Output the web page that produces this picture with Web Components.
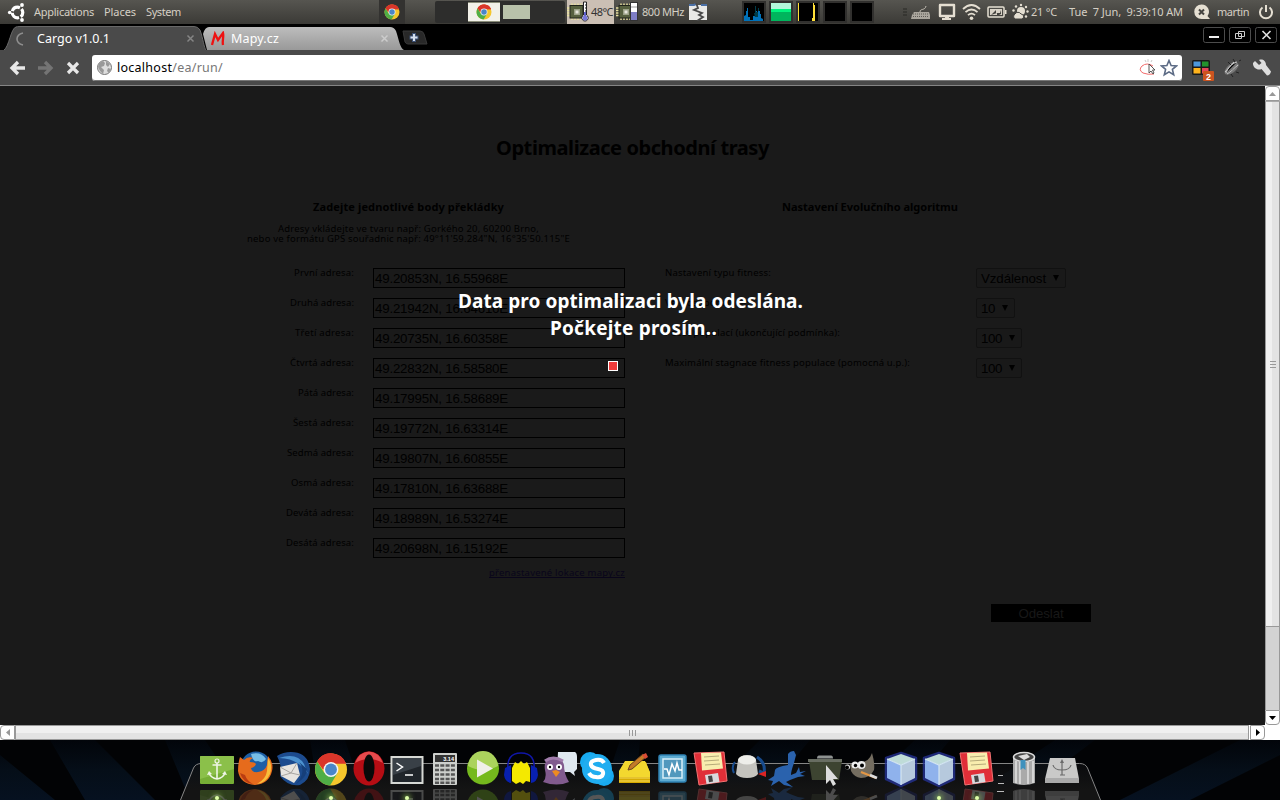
<!DOCTYPE html>
<html lang="cs">
<head>
<meta charset="utf-8">
<title>Cargo v1.0.1</title>
<style>
html,body{margin:0;height:100%;background:#000;overflow:hidden}
body{font-family:"Noto Sans","Open Sans",sans-serif}
</style>
</head>
<body>
<desk-screen></desk-screen>
<script>
const define = (name, html) => {
  const t = document.createElement('template');
  t.innerHTML = html;
  customElements.define(name, class extends HTMLElement {
    connectedCallback() {
      if (this.shadowRoot) return;
      this.attachShadow({ mode: 'open' }).append(document.importNode(t.content, true));
    }
  });
};

/* A single line of text, tracked so that it fills the width in its w attribute. */
customElements.define('fit-text', class extends HTMLElement {
  connectedCallback() {
    if (this.shadowRoot) return;
    const r = this.attachShadow({ mode: 'open' });
    r.innerHTML = '<style>:host{display:block;white-space:pre;flex:none}span{display:inline-block}</style><span><slot></slot></span>';
    const w = +this.getAttribute('w'), s = r.querySelector('span'), n = this.textContent.length;
    this.style.width = w + 'px';
    if (n > 1) s.style.letterSpacing = ((w - s.getBoundingClientRect().width) / n).toFixed(3) + 'px';
  }
});

const chrome = `<circle cx="18" cy="18" r="16" fill="#f5c62c"/><path d="M18 18L4.2 10A16 16 0 0 1 33 12H18z" fill="#d9352a"/><path d="M4.2 10A16 16 0 0 0 17 34L24.5 21.5 11 21z" fill="#4fae46"/><path d="M4.2 10A16 16 0 0 1 33 12H18L10 18z" fill="#d9352a"/><circle cx="18" cy="18" r="7.4" fill="#f4f4f4"/><circle cx="18" cy="18" r="5.9" fill="#4a86c8"/>`;
const chip = `<path d="M5 3.500v3M8 3.500v3M11 3.500v3M14 3.500v3M5 16v4M8 16v4M11 16v4M14 16v4" stroke="#e6e0a0" stroke-width="1.500"/><path d="M0 8h4M0 10.500h4M0 13h4M0 15.500h4" stroke="#e6e0a0" stroke-width="1.500"/><rect x="3" y="5.500" width="13" height="12.500" fill="#56603f" stroke="#20241a"/><rect x="7" y="9" width="6" height="6" fill="#9ba187"/><rect x="8.500" y="10.500" width="3" height="3" fill="#e6e6dc"/>`;

define('top-panel', `<style>
:host{display:flex;height:24px;align-items:center;background:linear-gradient(#565550,#3b3a36);color:#d5cfc4;font-size:11px;line-height:22px;box-sizing:border-box;padding-left:7px}
svg{display:block;flex:none}fit-text{margin-top:-1px}
.task{width:26px;height:24px;background:#333230;display:flex;align-items:center;justify-content:center;margin-left:198px}
.ws{width:130px;height:22px;background:#2d2d2c;display:flex;align-items:center;margin-left:30px;box-sizing:border-box;padding-left:33px;border-radius:2px}
.on{width:32px;height:18px;background:#f2f1e9;display:flex;justify-content:center;align-items:center;box-shadow:0 -1px #8a8d79,0 1px #8a8d79}
.win{width:27px;height:14px;background:#b9c2aa;margin-left:3px}
.temp{width:47px;height:24px;background:#cbbfb4;color:#333;display:flex;align-items:center;margin-left:2px}
.g{width:24px;height:22px;box-sizing:border-box;border:2px solid #31302e;background:#000;margin-right:3px}
</style>
<svg width="19" height="20" viewBox="0 0 19 20"><circle cx="10.500" cy="10.500" r="5.300" fill="none" stroke="#fff" stroke-width="3.200" stroke-dasharray="9.300 1.800" stroke-dashoffset="4.600"/><g fill="#fff"><circle cx="2.700" cy="10.500" r="1.800"/><circle cx="15" cy="3" r="1.900"/><circle cx="15" cy="18" r="1.900"/></g></svg>
<fit-text w="60" style="margin-left:8px">Applications</fit-text><fit-text w="32" style="margin-left:10px">Places</fit-text><fit-text w="35" style="margin-left:10px">System</fit-text>
<div class="task"><svg width="16" height="16" viewBox="1 1 34 34">${chrome}</svg></div>
<div class="ws"><div class="on"><svg width="16" height="16" viewBox="1 1 34 34">${chrome}</svg></div><div class="win"></div></div>
<div class="temp"><svg width="24" height="24">${chip}<path d="M16.500 2h3v13a3.200 3.200 0 1 1-3 0z" fill="#fff" stroke="#222"/><path d="M18 12v7" stroke="#6060c8" stroke-width="2"/><circle cx="18" cy="18" r="2.500" fill="#7777d8"/><path d="M18 5h2M18 8h2M18 11h2" stroke="#222"/></svg><fit-text w="22">48°C</fit-text></div>
<svg width="26" height="24" style="margin-left:2px">${chip}<rect x="14.500" y="2.500" width="7" height="18" fill="#fff" stroke="#333"/><path d="M15 12h6v8h-6z" fill="#7e7dc5"/><path d="M15 7h6" stroke="#999"/></svg>
<fit-text w="42">800 MHz</fit-text>
<svg width="18" height="18" style="margin-left:5px"><path d="M0 2h18v15H0z" fill="#e9e9e7"/><path d="M0 2h5l2-1M12 2h6" stroke="#4a6fa5" stroke-width="2"/><path d="M7 0l2 5-4 2 8 3-3 2 4 2-6 4" fill="none" stroke="#484848" stroke-width="1.800"/></svg>
<div class="g" style="margin-left:35px"><svg width="20" height="18"><path d="M0 18v-5l2-1V8h1V5h1v9h2v3h3v-4h2v1h1V8h1v6h1V8h2v3h1v4l2 1v2z" fill="#0072ba"/><path d="M10 10h1V3h1v6h2V5h1v3h-1v6h-3z" fill="#003d4a"/></svg></div>
<div class="g" style="background:linear-gradient(#b2f7da 0 6px,#00f47e 6px 9px,#00b55d 9px)"></div>
<div class="g"><svg width="20" height="18"><path d="M0 0h1v18H0zM15 0h1v2h1v16h-3v-3h1z" fill="#ffdf38"/></svg></div><div class="g"></div><div class="g"></div>
<svg width="5" height="8" style="margin-left:26px"><path d="M0 1h4M0 4h4M0 7h4" stroke="#292825"/></svg>
<svg width="20" height="18" style="margin-left:3px"><path d="M1 12l2-3h15l1 3v4H0z" fill="#aaa69d"/><path d="M2 11h16M2 13.500h16" stroke="#5d5a55" stroke-dasharray="1 1"/><path d="M9 9c0-4 5-1 6-6" fill="none" stroke="#c5c0b6"/></svg>
<svg width="18" height="18" style="margin-left:7px"><path d="M2 2h14v11H2z" fill="none" stroke="#e5dfd2" stroke-width="2.400" stroke-linejoin="round"/><path d="M7 14h4v1h2v2H4v-2h3z" fill="#e5dfd2"/></svg>
<svg width="19" height="18" style="margin-left:6px"><g fill="none" stroke="#e5dfd2" stroke-width="1.800"><path d="M1 6q8.500-8 17 0M3.500 9.200q6-5.500 12 0M6 12.200q3.500-3.200 7 0"/></g><circle cx="9.500" cy="15.200" r="1.800" fill="#e5dfd2"/></svg>
<svg width="20" height="14" style="margin-left:6px"><rect x="1" y="2" width="16" height="10" rx="1" fill="none" stroke="#e5dfd2" stroke-width="1.500"/><path d="M3 4h12v6H3z" fill="#d8d2c6"/><path d="M4 10l5-5v3h4l1-3v4l-4 2V8z" fill="#44433f"/><path d="M18 5h1.500v4H18z" fill="#e5dfd2"/></svg>
<svg width="18" height="18" style="margin-left:4px"><circle cx="10" cy="8" r="4" fill="#e5dfd2"/><g fill="#e5dfd2"><circle cx="10" cy="2" r="1.200"/><circle cx="5" cy="3.500" r="1.200"/><circle cx="15" cy="4" r="1.200"/><circle cx="2.500" cy="7.500" r="1.200"/><circle cx="16.500" cy="8.500" r="1.200"/><circle cx="15" cy="13.500" r="1.200"/></g><path d="M4 16a3 3 0 0 1 0-5 3.500 3.500 0 0 1 6 0 2.600 2.600 0 0 1 1 5z" fill="#e5dfd2" stroke="#454440"/></svg>
<fit-text w="26" style="margin-left:2px">21 °C</fit-text><fit-text w="114" style="margin-left:12px">Tue  7 Jun,  9:39:10 AM</fit-text>
<svg width="18" height="18" style="margin-left:10px"><path d="M8.500 1.500a7.200 7.200 0 1 0 0 14.500H17l-2.500-3A7.200 7.200 0 0 0 8.500 1.500z" fill="#e5dfd2"/><path d="M6 6.500l5 5M11 6.500l-5 5" stroke="#454440" stroke-width="2"/></svg>
<fit-text w="32" style="margin-left:6px">martin</fit-text>
<svg width="16" height="18" style="margin-left:9px"><path d="M4.500 4.500a6 6 0 1 0 7 0" fill="none" stroke="#e5dfd2" stroke-width="2"/><path d="M8 2v7" stroke="#e5dfd2" stroke-width="2"/></svg>
`);

define('tab-strip', `<style>
:host{display:flex;height:26px;background:#000;padding-left:4px;box-sizing:border-box;color:#fff;font-size:12.500px;line-height:24px}
.tab{display:grid;grid-template-columns:1fr;width:202px;height:24px;margin-top:2px;flex:none}
.tab>*{grid-area:1/1}.c{display:flex;align-items:center;padding:0 11px 0 11px}.c fit-text{margin-top:1px}
svg{display:block;flex:none}.a{z-index:1}.b{margin-left:-3px}
.w{display:flex;gap:4px;margin:3px 3px 0 auto}
</style>
<div class="tab a"><svg width="202" height="24"><path d="M0 24C5 21 7 2 12 1Q13 .500 16 .500H190Q194 .500 196 4C199 12 200 22 202 24z" fill="#4a4a4a"/><path d="M0 24C5 21 7 2 12 1Q13 .500 16 .500H190Q194 .500 196 4C199 12 200 22 202 24" fill="none" stroke="#696969"/></svg>
<div class="c"><svg width="12" height="16"><path d="M8 2C0 4 0 12 8 14" fill="none" stroke="#8e8e8e" stroke-width="1.600"/></svg><fit-text w="73" style="margin-left:10px">Cargo v1.0.1</fit-text><svg width="9" height="9" style="margin-left:auto"><path d="M1.500 1.500l6 6M7.500 1.500l-6 6" stroke="#858585" stroke-width="1.500"/></svg></div></div>
<div class="tab b"><svg width="202" height="24"><defs><linearGradient id="t" x2="0" y2="1"><stop stop-color="#bdbdbd"/><stop offset="1" stop-color="#999"/></linearGradient></defs><path d="M4 24L0 8Q2 1 6 1H187Q191 1 193 5C196 14 197 22 201 24z" fill="url(#t)"/></svg>
<div class="c" style="padding-left:8px"><svg width="15" height="16"><path d="M1 14L4 3l3 6 5-7c1 4-1 8 0 12" fill="none" stroke="#ee1111" stroke-width="2.300"/></svg><fit-text w="48" style="margin-left:5px">Mapy.cz</fit-text><svg width="9" height="9" style="margin-left:auto;margin-right:5px"><path d="M1.500 1.500l6 6M7.500 1.500l-6 6" stroke="#ccc" stroke-width="1.500"/></svg></div></div>
<svg width="26" height="16" style="margin:6px 0 0 -3px"><path d="M1 1h17q3 0 4 3l3 10H6q-2 0-3-2z" fill="#282828" stroke="#383838"/><path d="M12 3v9M7.500 7.500h9" stroke="#3c5074" stroke-width="4"/><path d="M12 4v7M8.500 7.500h7" stroke="#d5deec" stroke-width="2"/></svg>
<div class="w"><svg width="22" height="16"><rect x=".500" y=".500" width="21" height="15" rx="2" fill="none" stroke="#4c4c4c"/><path d="M6 10h10" stroke="#eee" stroke-width="2"/></svg>
<svg width="22" height="16"><rect x=".500" y=".500" width="21" height="15" rx="2" fill="none" stroke="#4c4c4c"/><path d="M9.500 4.500h6v5h-6zM6.500 6.500h6v5h-6z" fill="none" stroke="#ccc"/></svg>
<svg width="22" height="16"><rect x=".500" y=".500" width="21" height="15" rx="2" fill="none" stroke="#4c4c4c"/><path d="M7.500 4l8 8M15.500 4l-8 8" stroke="#e2e2e2" stroke-width="1.600"/></svg></div>
`);

define('nav-bar', `<style>
:host{display:flex;height:36px;background:#4a4a4a;border-bottom:1px solid #858585;box-sizing:border-box;align-items:center;padding:0 9px 0 9px}
svg{display:block;flex:none}
.o{flex:1;height:26px;margin:0 0 0 11px;background:#fff;border-radius:3px;display:flex;align-items:center;font-size:12.500px;color:#777;padding:0 4px 0 4px;line-height:24px;box-shadow:inset 0 -1px #777}
.o fit-text{margin-left:4px;margin-top:1px}b{font-weight:400;color:#000}
</style>
<svg width="17" height="16"><path d="M16 8H3M9 2L3 8l6 6" fill="none" stroke="#e8e8e8" stroke-width="3.300"/></svg>
<svg width="17" height="16" style="margin-left:11px"><path d="M1 8h13M8 2l6 6-6 6" fill="none" stroke="#747474" stroke-width="3.300"/></svg>
<svg width="14" height="14" style="margin-left:12px;margin-right:1px"><path d="M2 2l10 10M12 2L2 12" stroke="#e8e8e8" stroke-width="3.200"/></svg>
<div class="o"><svg width="17" height="17"><circle cx="8.500" cy="8.500" r="7" fill="#ddd" stroke="#777"/><path d="M3 4l4-2 2 2-1 3-3 1 3 3-1 4-3-3-2-4zM10 2l4 3-2 3-2-2zM12 9l3 1-2 4-2-2z" fill="#999"/></svg>
<fit-text w="106"><b>localhost</b>/ea/run/</fit-text>
<svg width="18" height="18" style="margin-left:auto"><path d="M14 7Q8 3 3 7-1 11 4 14q5 2 11 1" fill="none" stroke="#f26b6b"/><path d="M10 5v9l2-2 2 3 1-1-1.500-3H16z" fill="#fff" stroke="#444" stroke-width=".9"/><path d="M6 1l1 2M9 0v3M13 1l-1 2" stroke="#ccc"/></svg>
<svg width="18" height="18" style="margin-left:3px"><path d="M9 1.500l2.100 5 5.400.400-4.100 3.500 1.300 5.400L9 12.900l-4.700 2.900 1.300-5.400L1.500 6.900l5.400-.400z" fill="#fff" stroke="#5c6b85" stroke-width="1.600"/></svg></div>
<svg width="23" height="26" style="margin-left:10px"><rect y="5" width="18" height="15" rx="1.500" fill="#1a1a1a"/><path d="M1.500 6.500h7v5h-7z" fill="#4d97dc"/><path d="M10 6.500h6.500v5H10z" fill="#22922d"/><path d="M1.500 13h7v5.500h-7z" fill="#ffb31c"/><path d="M10 13h6.500v5.500H10z" fill="#e64659"/><rect x="11" y="16" width="11" height="10" rx="1" fill="#cb5420"/><text x="16.500" y="24.500" font-family="Liberation Sans,sans-serif" font-size="9" font-weight="700" text-anchor="middle" fill="#fff">2</text></svg>
<svg width="20" height="20" style="margin-left:7px"><path d="M3 16C1 12 7 5 14 3l3 4C14 14 8 18 3 16z" fill="#777"/><path d="M4 15C6 10 9 6 15 4M5 16c4-2 7-6 11-9M3 14L12 4" stroke="#c8c8c8"/><path d="M6 4l3 3M11 1l2 3M17 3l2-1M14 14l3 1M9 16l2 3" stroke="#222"/></svg>
<svg width="18" height="18" style="margin-left:11px"><path d="M2 2l4 4 2.500-2L6 1c3-1.500 7 .500 7 5l5 6.500q-1 4-4 4L8.500 10C4 12-.500 8 0 4z" fill="#dedede"/></svg>
`);

/* Address row: a right-aligned label and a text field. */
customElements.define('address-row', class extends HTMLElement {
  connectedCallback() {
    this.attachShadow({ mode: 'open' }).innerHTML = `<style>:host{display:flex;height:30px;justify-content:flex-end}
    .l{font-size:9.500px;line-height:10px}.i{box-sizing:border-box;width:252px;height:20px;border:1px solid #000;margin-left:19px;font:13.300px/20px "Liberation Sans",sans-serif;padding-left:1px}</style>
    <fit-text class="l" w="${this.getAttribute('w')}">${this.getAttribute('label')}</fit-text><div class="i"><fit-text w="133">${this.getAttribute('value')}</fit-text></div>`;
  }
});
/* Settings row: a label and a select box of the given width. */
customElements.define('option-row', class extends HTMLElement {
  connectedCallback() {
    const a = k => this.getAttribute(k);
    this.attachShadow({ mode: 'open' }).innerHTML = `<style>:host{display:grid;grid-template-columns:311px auto;justify-content:start;height:30px}
    .l{font-size:9.500px;line-height:10px}.s{box-sizing:border-box;width:${a('sw')}px;height:20px;border:1px solid #111;border-radius:2px;font:13.300px/20px "Liberation Sans",sans-serif;display:flex;justify-content:space-between;padding:0 6px 0 4px;background:#191919}svg{margin-top:5px}</style>
    <fit-text class="l" w="${a('w')}">${a('label')}</fit-text><div class="s"><fit-text w="${a('vw')}">${a('value')}</fit-text><svg width="6" height="8"><path d="M0 1h6L3 7z"/></svg></div>`;
  }
});

const rows = [['První adresa:',60,'49.20853N, 16.55968E'],['Druhá adresa:',64,'49.21942N, 16.64616E'],['Třetí adresa:',59,'49.20735N, 16.60358E'],['Čtvrtá adresa:',64,'49.22832N, 16.58580E'],['Pátá adresa:',56,'49.17995N, 16.58689E'],['Šestá adresa:',61,'49.19772N, 16.63314E'],['Sedmá adresa:',67,'49.19807N, 16.60855E'],['Osmá adresa:',63,'49.17810N, 16.63688E'],['Devátá adresa:',68,'49.18989N, 16.53274E'],['Desátá adresa:',68,'49.20698N, 16.15192E']];
define('cargo-page', `<style>
:host{display:block;position:relative;background:#1a1a1a;color:#000;height:639px;overflow:hidden}
h1{margin:0;padding-top:48px;display:flex;justify-content:center;font-size:20px;line-height:28px}
h2{margin:0;font-size:11px;line-height:14px;display:flex;justify-content:center}
.cols{display:grid;grid-template-columns:382px 1fr;column-gap:38px;padding:38px 0 0 245px}
.hint{font-size:9.500px;line-height:10px;height:62px;display:flex;flex-direction:column;align-items:center;padding-top:10px;box-sizing:border-box}
.form{width:380px}.left h2,.hint{width:327px}
.right h2{width:410px;margin-bottom:54px}
.link{display:flex;justify-content:flex-end;font-size:9.500px;line-height:10px;color:#09051a}
.link fit-text{border-bottom:1px solid #09051a;height:9px}
.go{width:100px;height:18px;background:#000;color:#181818;font:13.300px/20px "Liberation Sans",sans-serif;display:flex;justify-content:center;margin:216px 0 0 326px}
.msg{position:absolute;left:0;right:0;top:202px;display:flex;flex-direction:column;align-items:center;color:#fff;font-size:19px;font-weight:700;line-height:27px}
.spin{position:absolute;left:608px;top:275px;width:10px;height:10px;box-sizing:border-box;border:1px solid #fff;background:#ef3b3b}
</style>
<h1><fit-text w="273">Optimalizace obchodní trasy</fit-text></h1>
<div class="cols"><div class="left"><h2><fit-text w="191">Zadejte jednotlivé body překládky</fit-text></h2>
<div class="hint"><fit-text w="261">Adresy vkládejte ve tvaru např: Gorkého 20, 60200 Brno,</fit-text><fit-text w="323">nebo ve formátu GPS souřadnic např: 49°11'59.284"N, 16°35'50.115"E</fit-text></div>
<div class="form" style="margin-top:-8px">${rows.map(r => `<address-row label="${r[0]}" w="${r[1]}" value="${r[2]}"></address-row>`).join('')}
<div class="link"><fit-text w="136">přenastavené lokace mapy.cz</fit-text></div></div></div>
<div class="right"><h2><fit-text w="176">Nastavení Evolučního algoritmu</fit-text></h2>
<option-row label="Nastavení typu fitness:" w="106" value="Vzdálenost" vw="65" sw="90"></option-row>
<option-row label="Velikost populace:" w="84" value="10" vw="14" sw="39"></option-row>
<option-row label="Počet populací (ukončující podmínka):" w="175" value="100" vw="21" sw="46"></option-row>
<option-row label="Maximální stagnace fitness populace (pomocná u.p.):" w="245" value="100" vw="21" sw="46"></option-row>
<div class="go"><fit-text w="45">Odeslat</fit-text></div></div></div>
<div class="msg"><fit-text w="345" style="margin-right:4px">Data pro optimalizaci byla odeslána.</fit-text><fit-text w="167" style="margin-left:2px">Počkejte prosím..</fit-text></div>
<div class="spin"></div>
`);

define('v-scroll', `<style>:host{display:flex;flex-direction:column;width:15px;height:639px;background:#fff}
div{box-sizing:border-box;border:1px solid #999;display:flex;align-items:center;justify-content:center}.b{height:15px;background:#fff}
.t{height:526px;background:linear-gradient(90deg,#f0f0f0 50%,#e3e3e3 50%);border-top-color:#aaa}.k{flex:1;background:#d3d3d3;border-top:0;border-bottom:0}</style>
<div class="b" style="border-radius:4px 4px 0 0"><svg width="7" height="4"><path d="M0 4h7L3.500 0z" fill="#999"/></svg></div><div class="t"><svg width="6" height="7"><path d="M0 .500h6M0 3.500h6M0 6.500h6" stroke="#999"/></svg></div><div class="k"></div><div class="b" style="border-radius:0 0 4px 4px"><svg width="7" height="4"><path d="M0 0h7L3.500 4z"/></svg></div>`);
define('h-scroll', `<style>:host{display:flex;width:1265px;height:15px;background:#fff}
div{box-sizing:border-box;border:1px solid #999;display:flex;align-items:center;justify-content:center}.b{width:15px;background:#fff}
.t{flex:1;margin-right:1px;background:linear-gradient(#f0f0f0 50%,#e3e3e3 50%)}</style>
<div class="b" style="border-radius:4px 0 0 4px"><svg width="4" height="7"><path d="M4 0v7L0 3.500z" fill="#999"/></svg></div><div class="t"><svg width="7" height="6"><path d="M.500 0v6M3.500 0v6M6.500 0v6" stroke="#999"/></svg></div><div class="b" style="border-radius:0 4px 4px 0"><svg width="4" height="7"><path d="M0 0v7L4 3.500z"/></svg></div>`);

const cube = `<path d="M19 2L34 7V28L19 35 4 28V7z" fill="#1d2c8a" stroke="#26349b" stroke-width="2.500" stroke-linejoin="round" opacity=".75"/><path d="M19 3L33 8 19 14 5 8z" fill="#bfdcd8"/><path d="M5 8l14 6v20L5 27z" fill="#8fb2ec"/><path d="M33 8l-14 6v20l14-7z" fill="#b6c9dd"/><path d="M5 8l14 6 14-6M19 14v20" fill="none" stroke="#d4e6f2" stroke-width="1.200"/>`;
const floppy = `<path d="M2 2L32 1l3 29L7 34z" fill="#e02f38" stroke="#f27272" stroke-linejoin="round"/><path d="M9 2l20-.500 2 16-21 2z" fill="#f8edae"/><path d="M12 6l15-1M12 10l15-1M13 14l15-1" stroke="#b6ab7a"/><path d="M13 24l13-2 1.500 9-13 2z" fill="#d9dadd"/><path d="M16 25l4-.500 1 6-4 .700z" fill="#444"/>`;
const icons = {
anchor:`<rect x="2" y="5" width="34" height="28" rx="1" fill="#76ae35"/><path d="M2 5h34v13L2 28z" fill="#9acb58" opacity=".6"/><circle cx="19" cy="10" r="2" fill="none" stroke="#eef5e5" stroke-width="1.200"/><path d="M19 12v16M14.500 14h9M11 22q2 5 8 6 6-1 8-6" fill="none" stroke="#eef5e5" stroke-width="1.600"/><path d="M9 24l2-4 3 3zM29 24l-2-4-3 3z" fill="#eef5e5"/>`,
firefox:`<circle cx="20" cy="16" r="15.500" fill="#1d5fa5"/><path d="M15 3q10-3 15 5-3 5-8 2-5 2-7-7z" fill="#76bde7"/><path d="M4 6l4 3q4-4 9-2-4 2-3 4 5 0 6 2-1 3-5 4 1 5 7 4 7-1 9-7l1-9q6 7 4 15-3 13-17 14Q4 33 2 20 2 12 4 6z" fill="#e66b1c"/><path d="M32 7q5 7 2 16-4 9-13 10 9-5 10-13z" fill="#f9bd3a"/><path d="M4 22q3 10 13 11-6-3-8-9z" fill="#ba3c12"/>`,
thunder:`<path d="M3 5q6-4 14-4 17 0 19 17 0 11-10 16Q14 36 6 25q3-8-3-20z" fill="#1c4b8e"/><path d="M5 7q18-6 25 6l4 10Q24 7 5 7z" fill="#4b91cf"/><path d="M6 16l17-4 3 12-6 8L7 25z" fill="#e7e4df"/><path d="M6 16l11 6 6-10M7 25l10-3 9 2" stroke="#a8a5a1" fill="none"/><path d="M25 11q8 10-3 22 11-7 11-15z" fill="#163f7a"/>`,
chrome:`<g transform="translate(1 .500)">${chrome}</g>`,
opera:`<ellipse cx="19" cy="17.500" rx="15.500" ry="17" fill="#b60d14"/><path d="M5 12Q9 1 19 .500 29 1 33 12q-14-8-28 0z" fill="#e64a4d"/><ellipse cx="19" cy="17" rx="5.500" ry="13.500" fill="#090909"/>`,
term:`<rect x="2.500" y="5" width="33" height="28" fill="#d6d8d4"/><rect x="4.500" y="7" width="29" height="24" fill="#20252a"/><path d="M5 7h28v8L5 24z" fill="#394047"/><path d="M8.500 12l6 4-6 4M17 24h8" fill="none" stroke="#fff" stroke-width="1.500"/>`,
calc:`<rect x="7" y="2" width="24" height="32" rx="1" fill="#ced0cd"/><rect x="9" y="4" width="20" height="7" fill="#333"/><text x="28" y="9.700" font-family="Liberation Sans,sans-serif" font-size="5.500" font-weight="700" text-anchor="end" fill="#fff">3.14</text><path d="M9 14.500h20M9 19h20M9 23.500h20M9 28h20M9 31.800h20" stroke="#555" stroke-width="2.600" stroke-dasharray="4 1.300"/>`,
play:`<circle cx="19" cy="17.500" r="16" fill="#75b91d"/><path d="M4 15a15 15 0 0 1 30 0q-15 8-30 0z" fill="#abd35d"/><path d="M13 8.500v18l16-9z" fill="#efefea"/>`,
phones:`<path d="M6 20Q4 2 19 2t13 18" fill="none" stroke="#1016a8" stroke-width="1.600"/><path d="M3 17l6-3v18q-6-1-7-8zM35 17l-6-3v18q6-1 7-8z" fill="#0820b0"/><path d="M10 17l3-6 3 2 3-3 3 3 3-2 3 6v14l-4-1-3 3-3-2-4 2-4-3z" fill="#f4e900"/>`,
pidgin:`<path d="M18 1h17q2 1 2 5v12l-3 3 1 4-5-4H17z" fill="#dfe8f0"/><path d="M3 31q4-4 2-12Q3 8 13 6q9 0 11 8 0 9 5 17-12 5-26 0z" fill="#815b8e"/><path d="M5 10q8-6 18 0" stroke="#a07cac" fill="none" stroke-width="3"/><circle cx="10" cy="16" r="3" fill="#fff"/><circle cx="19" cy="16" r="3" fill="#fff"/><circle cx="10" cy="16" r="1.200"/><circle cx="19" cy="16" r="1.200"/><path d="M12 20l4-1 4 2-4 5z" fill="#ee8b20"/>`,
skype:`<circle cx="12" cy="11" r="10" fill="#18aaf0"/><circle cx="26" cy="25" r="10" fill="#18aaf0"/><circle cx="19" cy="18" r="15" fill="#20adf0"/><path d="M26 12q-2-4-8-3-6 1-5 5 1 3 7 4 6 1 5 5-1 4-7 3-5 0-7-4" fill="none" stroke="#fff" stroke-width="4"/>`,
note:`<path d="M3 21L9 11H30l4 11v10H3z" fill="#d7ab00"/><path d="M3 20L9 10H29l5 11v5H3z" fill="#f3d82f"/><path d="M3 27h31M3 30h31" stroke="#fff18a" stroke-width=".7"/><path d="M12 19l2-5L27 3l3 3-14 12z" fill="#c37a28" stroke="#6b451e"/><path d="M26 4l4-2 2 4-3 2z" fill="#d84b35"/>`,
monitor:`<rect x="5" y="4" width="27" height="27" rx="2" fill="#5eabd0" stroke="#2f82b3" stroke-width="1.500"/><rect x="9" y="8" width="19" height="19" fill="#5198bd" stroke="#d8eef7" stroke-width="1.500"/><path d="M10 18h3l2 6 3-11 3 7 2-8 2 7h3" fill="none" stroke="#fff" stroke-width="1.500"/>`,
floppy, bowl:`<path d="M5 11Q1 16 4 22" fill="none" stroke="#174b8d" stroke-width="2"/><path d="M27 6q9 6 7 16l-5-2" fill="none" stroke="#174b8d" stroke-width="3"/><path d="M28 23l8-3v6z" fill="#dc2424"/><path d="M8 9Q10 4 17 4t9 5l2 14q-3 4-11 4-8 0-11-4z" fill="#c5c4bf"/><ellipse cx="17" cy="9" rx="9" ry="4.500" fill="#eeeeea"/>`,
frog:`<path d="M20 3Q22 0 26 0l2 4-2 8q-3 8-3 12l5-2 3-6 1 5 6-1-6 3 5 2-7 1-8 3-4 2 7 5-9-2-5-4-8 5 2-5-5-1 6-4 1-6Q8 16 20 14z" fill="#2a62ad"/>`,
trash:`<path d="M3 10h33l-3 19H6z" fill="#3d4431"/><path d="M2 8h34v3H2z" fill="#686d62"/><path d="M13 4.500h12q2 0 2 3H11q0-3 2-3z" fill="#8e9291"/><path d="M20 14v19l4-4 3 6 3-2-3-5h5z" fill="#ddd"/>`,
gimp:`<path d="M6 13Q10 15 17 11q8 0 11-9 3 10 2 17-4 8-13 8Q10 26 7 20z" fill="#746d60"/><circle cx="3.500" cy="16" r="2.500" fill="#e8e8e8"/><circle cx="3" cy="16.500" r="2"/><circle cx="11" cy="14" r="3.500" fill="#eee"/><circle cx="17.500" cy="14" r="4" fill="#eee"/><circle cx="11.500" cy="14.500" r="1.700"/><circle cx="18" cy="14.500" r="2"/><path d="M17 21l15 6" stroke="#e29644" stroke-width="2.200"/><path d="M26 24l7 3" stroke="#ddd" stroke-width="2.500"/>`,
cube, bin:`<path d="M7 6Q18 0 29 6v26q-11 4-22 0z" fill="#aaa"/><path d="M10 10v22M14 11v22M22 11v22M27 10v22" stroke="#dcdcdc" stroke-width="1.700"/><ellipse cx="18" cy="6" rx="10.500" ry="4.500" fill="#444" stroke="#ddd" stroke-width="1.500"/><path d="M12 5l9-2 3 3-6 3z" fill="#ddd"/><path d="M14.500 9h5v10l-2.500-2-2.500 2z" fill="#3e91bd"/>`,
usb:`<path d="M6 7h25l4 21H1z" fill="#c9c9c8"/><path d="M1 27h34v5H1z" fill="#aaa"/><path d="M18 10v14M9 14q1 5 9 5 8 0 9-5M16 24h5" fill="none" stroke="#6a6a6a" stroke-width="1.200"/><path d="M18 8l2 4h-4z" fill="#6a6a6a"/>`
};
/* Launcher icon with its mirror image; the lit attribute adds the running mark. */
customElements.define('dock-icon', class extends HTMLElement {
  connectedCallback() {
    const p = icons[this.getAttribute('name')];
    this.attachShadow({ mode: 'open' }).innerHTML = `<style>:host{display:block;width:38px;height:49px;overflow:hidden;flex:none;position:relative}svg{display:block}.r{transform:scaleY(-1);opacity:.28}
    i{position:absolute;left:17px;bottom:0;width:4px;height:4px;border-radius:2px;background:#dfffa8;box-shadow:0 0 5px 2px #9bd35a88}</style><svg width="38" height="36">${p}</svg><svg class="r" width="38" height="36" aria-hidden="true">${p.replace(/<text.*?<\/text>/g,'')}</svg>${this.hasAttribute('lit') ? '<i></i>' : ''}`;
  }
});
const names = 'anchor* firefox thunder chrome* opera term* calc play phones pidgin skype note monitor floppy bowl frog trash gimp cube cube* floppy*'.split(' ');
define('app-dock', `<style>
:host{display:grid;height:60px;background:#020305;overflow:hidden}:host>*{grid-area:1/1}
.bg,.i{grid-area:1/1}
.i{display:flex;padding:11px 0 0 198px;z-index:1}
.s{width:10px;height:49px;flex:none}
</style>
<svg class="bg" width="1280" height="60"><defs><linearGradient id="g" x2="0" y2="1"><stop stop-color="#101113" stop-opacity=".6"/><stop offset=".7" stop-color="#141414"/></linearGradient><linearGradient id="s" x2="0" y2="1"><stop stop-color="#02050a"/><stop offset=".5" stop-color="#050e18"/><stop offset="1" stop-color="#061120"/></linearGradient></defs><g fill="url(#s)"><path d="M50 0h45l60 60h-70zM165 0h40l40 60h-55zM310 0h35l20 60h-45zM620 0h20l-5 60h-35zM760 0h50l-50 60h-60zM915 0h35l-50 60h-50zM1055 0h40l-80 60h-50zM1240 0h40v15l-90 45h-70zM0 15l55 45H0z"/></g>
<path d="M180 60l13-32q2-4 8-4h878q6 0 8 4l13 32z" fill="url(#g)"/><path d="M180.500 60l13-32q2-4.500 8-4.500h878q6 0 8 4.500l13 32" fill="none" stroke="#858585"/></svg>
<div class="i">${names.map(n => `<dock-icon name="${n.replace('*','')}"${n.endsWith('*') ? ' lit' : ''}></dock-icon>`).join('')}<svg class="s" width="10" height="49"><path d="M2 24.500h5M2 32.500h6M1 40.500h7" stroke="#bbb"/></svg><dock-icon name="bin"></dock-icon><dock-icon name="usb"></dock-icon></div>
`);

define('desk-screen', `<style>:host{display:flex;flex-direction:column;width:1280px;height:800px;overflow:hidden}.p{display:grid;grid-template-columns:1265px 15px;background:#fff}</style>
<top-panel></top-panel><tab-strip></tab-strip><nav-bar></nav-bar><div class="p"><cargo-page></cargo-page><v-scroll></v-scroll><h-scroll></h-scroll></div><app-dock></app-dock>`);
</script>
</body>
</html>
